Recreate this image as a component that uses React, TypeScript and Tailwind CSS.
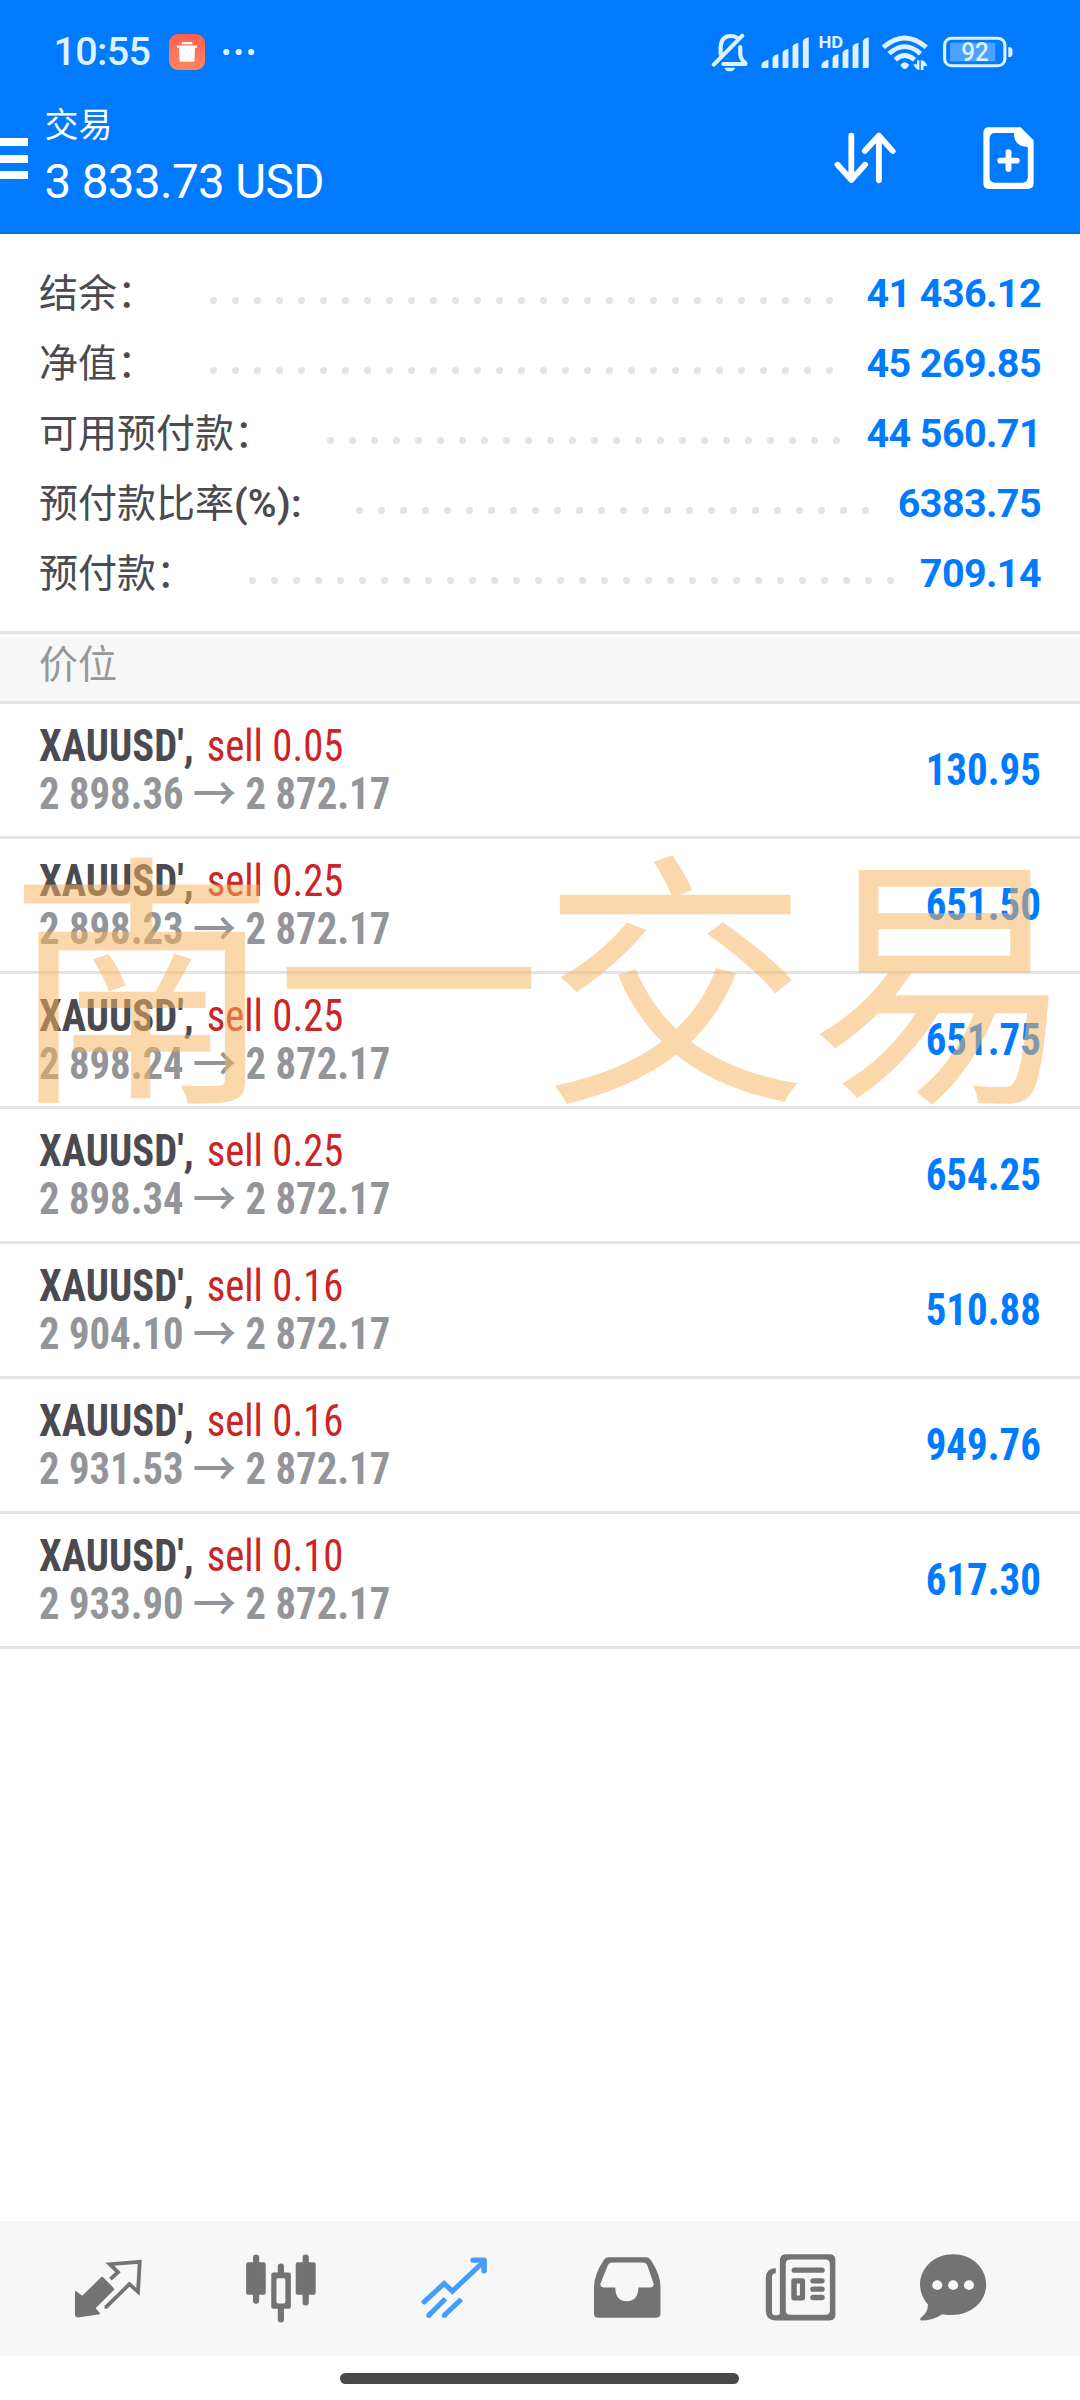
import type { ReactNode } from 'react';

interface AccountRow {
  label: string;
  suffix?: string;
  value: string;
  dots: number;
}

interface Position {
  symbol: string;
  volume: string;
  open: string;
  current: string;
  profit: string;
}

const account: AccountRow[] = [
  { label: '结余：', value: '41 436.12', dots: 29 },
  { label: '净值：', value: '45 269.85', dots: 29 },
  { label: '可用预付款：', value: '44 560.71', dots: 24 },
  { label: '预付款比率', suffix: '(%):', value: '6383.75', dots: 24 },
  { label: '预付款：', value: '709.14', dots: 30 },
];

const positions: Position[] = [
  { symbol: "XAUUSD',", volume: 'sell 0.05', open: '2 898.36', current: '2 872.17', profit: '130.95' },
  { symbol: "XAUUSD',", volume: 'sell 0.25', open: '2 898.23', current: '2 872.17', profit: '651.50' },
  { symbol: "XAUUSD',", volume: 'sell 0.25', open: '2 898.24', current: '2 872.17', profit: '651.75' },
  { symbol: "XAUUSD',", volume: 'sell 0.25', open: '2 898.34', current: '2 872.17', profit: '654.25' },
  { symbol: "XAUUSD',", volume: 'sell 0.16', open: '2 904.10', current: '2 872.17', profit: '510.88' },
  { symbol: "XAUUSD',", volume: 'sell 0.16', open: '2 931.53', current: '2 872.17', profit: '949.76' },
  { symbol: "XAUUSD',", volume: 'sell 0.10', open: '2 933.90', current: '2 872.17', profit: '617.30' },
];

function StatusIcon({ box, className, children }: { box: string; className: string; children: ReactNode }) {
  return (
    <svg viewBox={box} preserveAspectRatio="none" className={`h-[40px] shrink-0 overflow-visible ${className}`} fill="#def1ff">
      {children}
    </svg>
  );
}

function SignalBars({ x }: { x: number }) {
  return (
    <g>
      <path d={`M${x} 204v-10q2-11 20-15v22q0 3-3 3z`} />
      <path d={`M${x + 32} 204v-30q2-9 17-12v39q0 3-3 3z`} />
      <path d={`M${x + 61} 204v-46q2-9 17-12v55q0 3-3 3z`} />
      <path d={`M${x + 90} 204v-64q2-9 17-12v73q0 3-3 3z`} />
      <path d={`M${x + 120} 204v-80q2-9 17-12v89q0 3-3 3z`} />
    </g>
  );
}

function StatusBar() {
  return (
    <div className="flex h-[104px] items-center pl-[53.500px] pr-[67px]">
      <span className="text-[39.5px] font-medium leading-none tracking-[-0.7px] text-[#def1ff]">10:55</span>
      <svg viewBox="0 0 36 36" className="ml-[19px] h-[36px] w-[36px]">
        <defs>
          <linearGradient id="trash" x1="0" y1="0" x2="0" y2="1">
            <stop offset="0" stopColor="#ff6150" />
            <stop offset="1" stopColor="#ff8560" />
          </linearGradient>
        </defs>
        <rect width="36" height="36" rx="9" fill="url(#trash)" />
        <path d="M13.500 8h9q1 0 1 2.300h-11q0-2.300 1-2.300zM8 11.500h20v2.300h-2l-.5 12.400q-.1 1.600-1.800 1.600H12.300q-1.700 0-1.800-1.600L10 13.800H8z" fill="#fff" />
      </svg>
      <svg viewBox="0 0 32 8" className="ml-[18px] h-[8px] w-[32px]" fill="#def1ff">
        <circle cx="3.300" cy="4" r="3.100" />
        <circle cx="15.700" cy="4" r="3.100" />
        <circle cx="28.200" cy="4" r="3.100" />
      </svg>
      <div className="ml-auto flex items-center">
        <StatusIcon box="498 96 126 120" className="w-[43.400px]">
          <g fill="none" stroke="#def1ff" strokeWidth="12" strokeLinecap="round" strokeLinejoin="round">
            <path d="M526 163v-22q2-34 31-33q9 0 16 5" />
            <path d="M506 194L589 107" />
            <path d="M583 141v22q1 14 15 27v2H534" />
          </g>
          <path d="M537 203h31q-4 11-16 11t-15-11z" />
        </StatusIcon>
        <StatusIcon box="624 96 171 120" className="w-[58.900px]">
          <SignalBars x={643} />
        </StatusIcon>
        <StatusIcon box="795 96 178 120" className="w-[61.300px]">
          <SignalBars x={817} />
          <text x="808" y="144" fontSize="49" fontWeight="700" textLength="72" lengthAdjust="spacingAndGlyphs">HD</text>
        </StatusIcon>
        <StatusIcon box="973 96 176 120" className="w-[60.600px]">
          <g fill="none" stroke="#def1ff" strokeWidth="14">
            <path d="M997 142q62-56 125 0" />
            <path d="M1014 161q45-42 91 0" />
            <path d="M1032 179q27-25 56 0" />
          </g>
          <path d="M1047 194q12-15 25 0q-1 6-9 12q-3 2-7 0q-8-6-9-12z" />
          <path d="M1095 181h7v29h-3q-10-5-15-17h11zM1106 210v-29h4q10 3 15 17h-11v12z" />
        </StatusIcon>
        <StatusIcon box="1149 96 225 120" className="w-[77.500px]">
          <rect x="1174" y="115" width="175" height="82" rx="20" fill="none" stroke="#def1ff" strokeWidth="9" />
          <rect x="1190" y="128" width="131" height="56" fill="#4ba2ff" />
          <path d="M1359 141q12 0 12 10v12q0 9-12 9z" />
          <text x="1222" y="183" fontSize="75" fontWeight="500" textLength="80" lengthAdjust="spacingAndGlyphs">92</text>
        </StatusIcon>
      </div>
    </div>
  );
}

function Header() {
  return (
    <header className="h-[234px] border-b-2 border-[#0b6fdc] bg-[#007aff] text-white">
      <StatusBar />
      <div className="flex h-[108px] items-center pr-[44px]">
        <div className="mt-[1px] flex w-[27.500px] flex-col gap-[8.500px]">
          <div className="h-[8px] bg-white" />
          <div className="h-[8px] bg-white" />
          <div className="h-[8px] bg-white" />
        </div>
        <div className="ml-[17px] mt-[3px] flex flex-col">
          <span className="text-[34px] leading-[46px]">交易</span>
          <span className="text-[47.500px] leading-[69px] tracking-[-0.600px]">3 833.73 USD</span>
        </div>
        <svg viewBox="845 375 315 195" preserveAspectRatio="none" className="ml-auto h-[65px] w-[108.500px]" fill="none" stroke="#fff" strokeWidth="17" strokeLinecap="round" strokeLinejoin="round">
          <path d="M904 404V537M864 491L904 537L944 491" />
          <path d="M984 538V404M943 450L984 404L1024 450" />
        </svg>
        <svg viewBox="1160 375 280 195" preserveAspectRatio="none" className="h-[65px] w-[96.400px]">
          <path
            d="M1302 379h92l38 39v129q0 17-17 17h-113q-16 0-16-17V396q0-17 16-17zM1320 396q-16 0-16 17v115q0 17 16 17h79q16 0 16-17v-90q-40 0-40-42z"
            fill="#fff"
            fillRule="evenodd"
          />
          <path d="M1359 453v51M1335 479h48" stroke="#fff" strokeWidth="17" strokeLinecap="round" />
        </svg>
      </div>
    </header>
  );
}

function Leader({ count }: { count: number }) {
  return (
    <div className="mt-[16px] flex gap-[15px]">
      {Array.from({ length: count }, (_, i) => (
        <span key={i} className="h-[7px] w-[7px] rounded-full bg-[#e3e3e3]" />
      ))}
    </div>
  );
}

function AccountSummary() {
  return (
    <section className="h-[397px] px-[39px] pt-[23px]">
      {account.map((row) => (
        <div key={row.label} className="flex h-[70px] items-center">
          <span className="mb-[5px] mr-[54px] whitespace-nowrap font-['Noto_Sans_CJK_SC',sans-serif] text-[39px] leading-[70px] text-[#4a4a4f]">
            {row.label}
            {row.suffix && <span className="font-['Roboto',sans-serif] font-semibold leading-none tracking-[0.3px]">{row.suffix}</span>}
          </span>
          <Leader count={row.dots} />
          <span className="ml-auto mt-[3px] text-[39.500px] font-bold tracking-[-0.6px] text-[#007aff]">{row.value}</span>
        </div>
      ))}
    </section>
  );
}

function PositionRow({ position }: { position: Position }) {
  return (
    <div className="flex h-[135px] items-center justify-between border-b-[3px] border-[#e3e3e3] px-[39px] font-['Roboto_Condensed','Roboto',sans-serif] text-[44px] leading-[48px]">
      <div className="origin-left scale-x-[0.925]">
        <div className="flex gap-[14px]">
          <span className="font-bold text-[#4a4a50]">{position.symbol}</span>
          <span className="text-[#cc2424]">{position.volume}</span>
        </div>
        <div className="flex font-bold text-[#939598]">
          <span>{position.open}</span>
          <span className="mx-[10px] font-['Noto_Sans_CJK_SC',sans-serif] text-[47px] font-medium leading-[42px]">→</span>
          <span>{position.current}</span>
        </div>
      </div>
      <span className="origin-right scale-x-[0.93] font-bold text-[#007aff]">{position.profit}</span>
    </div>
  );
}

function TabIcon({ box, children }: { box: string; children: ReactNode }) {
  return (
    <div className="flex items-center justify-center">
      <svg viewBox={box} preserveAspectRatio="none" className="h-[70px] w-[75.800px] overflow-visible" fill="#737373">
        {children}
      </svg>
    </div>
  );
}

function TabBar() {
  return (
    <nav className="grid h-[135px] grid-cols-6 bg-[#f7f7f7] px-[22px]">
      {/* Quotes */}
      <TabIcon box="204.600 160.500 220 210">
        <path d="M297 228q3 0 37 38L279 323l13 15q-2 4-6 4l-58 9q-9 0-9-9V276q0-5 4-4l17 14z" />
        <path d="M305 319h5L377 251L402 274L407 184L320 191L344 215L322 236" fill="none" stroke="#737373" strokeWidth="11" />
      </TabIcon>
      {/* Chart */}
      <TabIcon box="706 160.500 220 210">
        <rect x="715" y="185" width="57" height="98" rx="6" />
        <rect x="859" y="185" width="58" height="98" rx="6" />
        <path d="M744 171V301M888 171V306M816 198V220M816 322V357" stroke="#737373" strokeWidth="18" strokeLinecap="round" />
        <path
          d="M794 216h45q6 0 6 6v97q0 6-6 6h-45q-6 0-6-6v-97q0-6 6-6zM808 233q-5 0-5 5v66q0 5 5 5h16q5 0 5-5v-66q0-5-5-5z"
          fillRule="evenodd"
        />
      </TabIcon>
      {/* Trade */}
      <TabIcon box="1207.400 160.500 220 210">
        <g fill="none" stroke="#479cf8" strokeWidth="15">
          <path d="M1231 304L1289 249L1313 272L1405 182" strokeLinecap="round" />
          <path d="M1373 179H1405V211" strokeWidth="16" strokeLinecap="round" strokeLinejoin="round" />
          <path d="M1244 345L1293 295M1289 345L1339 296" />
        </g>
        <circle cx="1245" cy="345" r="7.500" fill="#479cf8" />
        <circle cx="1290" cy="345" r="7.500" fill="#479cf8" />
      </TabIcon>
      {/* History */}
      <TabIcon box="140.700 160.500 220 210">
        <path
          d="M200 170h109q9 0 15 10q27 42 27 79v80q0 13-13 13H171q-13 0-13-13v-80q0-35 28-80q5-9 14-9zM211 186q-9 0-13 9l-21 54q-2 11 10 12h33q0 41 33 41t34-41h34q12-1 10-12l-18-54q-4-9-13-9z"
          fillRule="evenodd"
        />
      </TabIcon>
      {/* News */}
      <TabIcon box="642.100 160.500 220 210">
        <path
          d="M715 161h126q17 0 17 17v165q0 17-17 17H685q-29 0-29-29v-99q0-29 29-29l0 15q-11 0-11 12v105q0 9 9 9h7q7 0 7-9V178q0-17 18-17zM727 177q-13 0-13 13v140q0 13 13 13h102q13 0 13-13V190q0-13-13-13z"
          fillRule="evenodd"
        />
        <rect x="731" y="201" width="96" height="16" rx="8" />
        <path d="M738 233h24q8 0 8 8v51q0 8-8 8h-24q-8 0-8-8v-51q0-8 8-8zM746 249v36h9v-36z" fillRule="evenodd" />
        <rect x="785" y="233" width="42" height="16" rx="8" />
        <rect x="785" y="258" width="42" height="16" rx="8" />
        <rect x="785" y="283" width="42" height="16" rx="8" />
      </TabIcon>
      {/* Messages */}
      <TabIcon box="1143.500 160.500 220 210">
        <path d="M1199 161c53 0 96 40 96 91c0 57-54 103-127 89q-28 19-62 19q-4-3-2-7q22-16 22-40q-23-29-23-61c0-51 43-91 96-91z" />
        <g fill="#f7f7f7">
          <circle cx="1153" cy="254" r="14.500" />
          <circle cx="1199" cy="254" r="14.500" />
          <circle cx="1245" cy="254" r="14.500" />
        </g>
      </TabIcon>
    </nav>
  );
}

export default function App() {
  return (
    <div className="relative flex h-[2400px] w-[1080px] flex-col overflow-hidden bg-white font-['Roboto','Noto_Sans_CJK_SC',sans-serif]">
      <Header />
      <AccountSummary />
      <div className="h-[73px] border-y-[3px] border-[#e3e3e3] pt-[3px]">
        <div className="h-[64px] bg-[#f7f7f7] pl-[39px] font-['Noto_Sans_CJK_SC',sans-serif] text-[39px] leading-[49px] text-[#97979a]">价位</div>
      </div>
      <main className="flex-1">
        {positions.map((p) => (
          <PositionRow key={p.open} position={p} />
        ))}
      </main>
      <TabBar />
      <div className="flex h-[44px] justify-center pr-[1px] pt-[17px]">
        <div className="h-[10.500px] w-[399px] rounded-full bg-[#484848]" />
      </div>
      {/* Channel watermark over the list */}
      <div className="pointer-events-none absolute left-[8px] top-[832px] whitespace-nowrap font-['Noto_Sans_CJK_SC',sans-serif] text-[267px] leading-[267px] text-[#f7b55d]/52">
        南一交易
      </div>
    </div>
  );
}
